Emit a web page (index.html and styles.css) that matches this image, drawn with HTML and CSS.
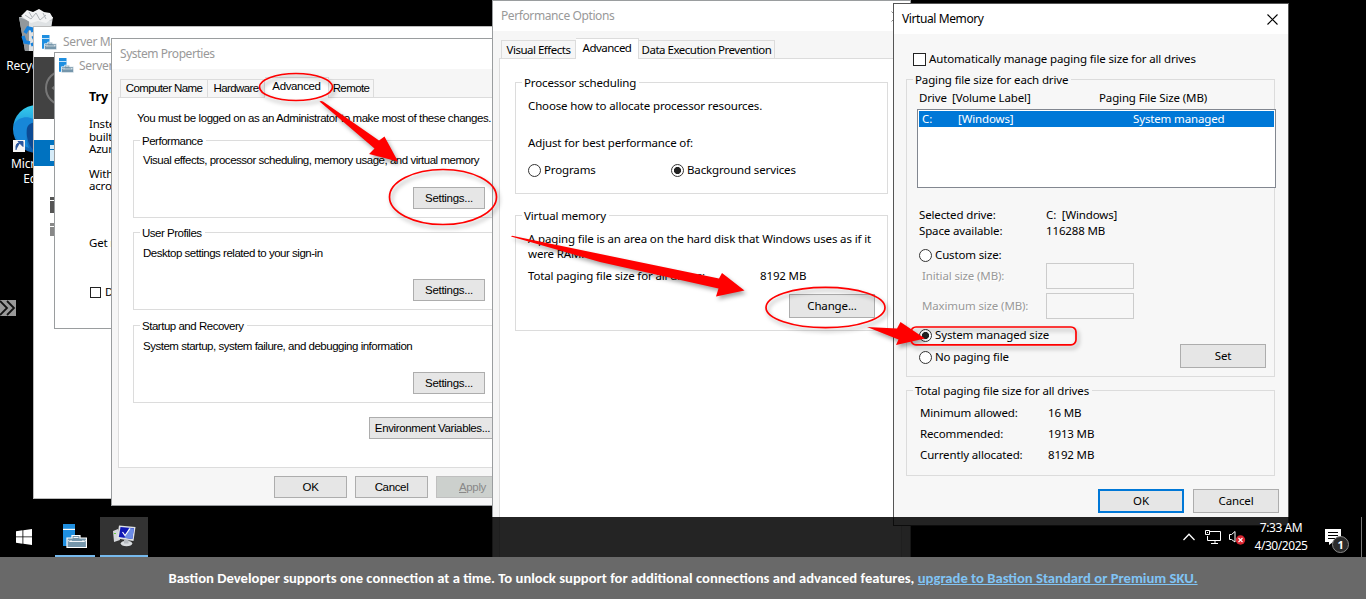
FILE: index.html
```html
<!DOCTYPE html>
<html lang="en">
<head>
<meta charset="utf-8">
<title>Virtual Memory</title>
<link rel="stylesheet" href="styles.css">
</head>
<body>
<svg class="defs" width="0" height="0">
  <symbol id="server" viewBox="0 0 24 24">
    <path d="M0 0H12V22H0Z" fill="#1f8fe0"/><path d="M0 4.800H12V6H0Z" fill="#fff"/>
    <path d="M4 14H9V11.500H17V14H23.500V23.500H4Z" fill="#7596ab" stroke="#fff" stroke-width="1.200"/>
    <path d="M10.500 13.500h5M5 16.500l2 1h14l2-1M8 16v2M20 16v2" fill="none" stroke="#fff" stroke-width=".9"/>
  </symbol>
</svg>
<main class="desktop">
  <div class="shortcut bin">
    <svg width="42" height="44" viewBox="0 0 42 44">
      <path d="M3 8 37 8 31 42 9 42Z" fill="#c9cccf"/><path d="M3 8 13 12 13 42 9 42Z" fill="#92989c"/><path d="M13 12H36L31 42H13Z" fill="#dfe2e4"/>
      <path d="M5 7 11 1 17 3 23 0 28 3 34 4 37 9 30 14 22 12 15 14Z" fill="#f2f3f4"/><path d="M9 6l6 4 5-6 4 7 6-5M13 3l3 5M27 4l3 6" stroke="#aeb3b7" fill="none"/>
      <path d="M9 24l3-5 4 1 1 3M7 27l2 6 5 1M15 36l5-2M17 27l2 4" stroke="#1681dc" stroke-width="3.500" fill="none"/>
    </svg>
    <span>Recycle Bin</span>
  </div>
  <div class="shortcut edge">
    <svg width="48" height="50" viewBox="0 0 48 50">
      <defs><linearGradient id="eg" x1="0" y1="0" x2="0" y2="1"><stop offset="0" stop-color="#35cdec"/><stop offset=".5" stop-color="#1c93dd"/><stop offset="1" stop-color="#0a58a8"/></linearGradient></defs>
      <circle cx="24" cy="25" r="24" fill="url(#eg)"/><path d="M1 20C8 10 20 12 26 20 14 18 10 28 16 44 4 40 0 30 1 20Z" fill="#1787d8"/><path d="M14 24C16 18 22 18 26 20V50C18 48 12 34 14 24Z" fill="#0c4a94"/>
      <path d="M0 36H12V48H0Z" fill="#f5f5f5"/><path d="M3 46V42Q3 39 7 39M5 37.500H10V42.500Z" fill="#29569e" stroke="#29569e"/>
    </svg>
    <span>Microsoft<br>Edge</span>
  </div>
  <div class="handle"><svg width="16" height="16" viewBox="0 0 16 16"><path d="M0 1l7 7-7 7M7 1l7 7-7 7" fill="none" stroke="#111" stroke-width="1.800"/></svg></div>

  <section class="win manager">
    <header class="caption"><svg width="15" height="15"><use href="#server"/></svg>Server Ma</header>
    <div class="band"><svg width="36" height="36" viewBox="0 0 36 36"><circle cx="18" cy="18" r="17" fill="none" stroke="#777" stroke-width="2"/><path d="M14 13l-6 5 6 5" fill="none" stroke="#777" stroke-width="2"/></svg></div>
    <nav class="side"><i class="sel"><b></b></i><i class="m1"></i><i class="m2"></i></nav>
  </section>

  <section class="win promo">
    <header class="caption"><svg width="15" height="15"><use href="#server"/></svg>Server</header>
    <h2>Try W</h2>
    <p>Inste<br>built<br>Azur</p>
    <p class="p2">With<br>acro</p>
    <p class="p3">Get m</p>
    <label class="dont"><i class="check small"></i>D</label>
  </section>

  <section class="win system">
    <header class="caption">System Properties</header>
    <div class="tabs"><span class="t1">Computer Name</span><span class="t2">Hardware</span><span class="t3 on">Advanced</span><span class="t4">Remote</span></div>
    <div class="page">
      <p class="note">You must be logged on as an Administrator to make most of these changes.</p>
      <div class="group"><span class="legend">Performance</span><p>Visual effects, processor scheduling, memory usage, and virtual memory</p><span class="btn">Settings...</span></div>
      <div class="group"><span class="legend">User Profiles</span><p>Desktop settings related to your sign-in</p><span class="btn">Settings...</span></div>
      <div class="group last"><span class="legend">Startup and Recovery</span><p>System startup, system failure, and debugging information</p><span class="btn">Settings...</span></div>
      <span class="btn env">Environment Variables...</span>
    </div>
    <footer><span class="btn">OK</span><span class="btn">Cancel</span><span class="btn off"><u>A</u>pply</span></footer>
  </section>

  <section class="win perf">
    <header class="caption">Performance Options<svg width="11" height="11" viewBox="0 0 11 11"><path d="M.5.5l10 10M10.500.5l-10 10" stroke="#888"/></svg></header>
    <div class="tabs"><span class="t1">Visual Effects</span><span class="t2 on">Advanced</span><span class="t3">Data Execution Prevention</span></div>
    <div class="page">
      <div class="group sched">
        <span class="legend">Processor scheduling</span>
        <p>Choose how to allocate processor resources.</p>
        <p class="adjust">Adjust for best performance of:</p>
        <div class="radios"><label><i class="radio"></i>Programs</label><label><i class="radio on"></i>Background services</label></div>
      </div>
      <div class="group vmem">
        <span class="legend">Virtual memory</span>
        <p>A paging file is an area on the hard disk that Windows uses as if it<br>were RAM.</p>
        <div class="total"><span>Total paging file size for all drives:</span><span>8192 MB</span></div>
        <span class="btn">Change...</span>
      </div>
    </div>
  </section>

  <section class="win vm">
    <header class="caption">Virtual Memory<svg width="11" height="11" viewBox="0 0 11 11"><path d="M.5.5l10 10M10.500.5l-10 10" stroke="#000" stroke-width="1.100"/></svg></header>
    <label class="auto"><i class="check"></i>Automatically manage paging file size for all drives</label>
    <div class="group drives">
      <span class="legend">Paging file size for each drive</span>
      <div class="cols"><span>Drive</span><span>[Volume Label]</span><span>Paging File Size (MB)</span></div>
      <div class="list"><div class="item"><span>C:</span><span>[Windows]</span><span>System managed</span></div></div>
      <div class="facts"><span>Selected drive:</span><span>C:&nbsp; [Windows]</span><span>Space available:</span><span>116288 MB</span></div>
      <label class="opt custom"><i class="radio"></i>Custom size:</label>
      <div class="field"><span>Initial size (MB):</span><i></i></div>
      <div class="field second"><span>Maximum size (MB):</span><i></i></div>
      <div class="choose">
        <div><label class="opt"><i class="radio on"></i>System managed size</label><label class="opt nofile"><i class="radio"></i>No paging file</label></div>
        <span class="btn">Set</span>
      </div>
    </div>
    <div class="group totals">
      <span class="legend">Total paging file size for all drives</span>
      <div class="sums"><span>Minimum allowed:</span><span>16 MB</span><span>Recommended:</span><span>1913 MB</span><span>Currently allocated:</span><span>8192 MB</span></div>
    </div>
    <footer><span class="btn default">OK</span><span class="btn">Cancel</span></footer>
  </section>

  <div class="taskbar">
    <svg class="start" width="16" height="16" viewBox="0 0 16 16"><path d="M0 2.200 6.500 1.300V7.500H0ZM7.300 1.200 16 0V7.500H7.300ZM0 8.300H6.500V14.700L0 13.800ZM7.300 8.300H16V16L7.300 14.800Z" fill="#fff"/></svg>
    <span class="app"><svg width="24" height="24"><use href="#server"/></svg></span>
    <span class="app active"><svg width="23" height="22" viewBox="0 0 23 22"><path d="M0 6l5-2 2 11-6 2Z" fill="#d5d8dc"/><path d="M1 8h2v1H1Z" fill="#6c4"/><path d="M6 .5 22.500 2 20.500 16 4 13.500Z" fill="#dfe2e6"/><path d="M7.500 2 21 3.300 19.300 14 5.800 12Z" fill="#1018b4"/><path d="M16 3l5 .4-1.700 10.500-8-1.200Z" fill="#6c8ce6"/><path d="M9.500 7l2.500 3.500 5-7" fill="none" stroke="#fff" stroke-width="1.200"/><ellipse cx="13.500" cy="18.500" rx="5.800" ry="2.800" fill="#d9dcdf"/><path d="M11 14.500h4.500v4H11Z" fill="#b6babf"/></svg></span>
    <div class="tray">
      <svg class="up" width="12" height="8" viewBox="0 0 12 8"><path d="M.5 7 6 1.300 11.500 7" fill="none" stroke="#fff" stroke-width="1.300"/></svg>
      <svg class="net" width="17" height="15" viewBox="0 0 17 15"><path d="M4.500 1.500H15.500V10.500H2.500V6M10 11V14M6 13.500H13M.5.5H4.500V4.500H.5ZM2 2.500H3" fill="none" stroke="#fff"/></svg>
      <svg class="vol" width="17" height="15" viewBox="0 0 17 15"><path d="M.5 4.500H2.500L6 1.500V12L2.500 9.500H.5Z" fill="none" stroke="#fff"/><circle cx="11.500" cy="10" r="4.700" fill="#da2530"/><path d="M9.500 8l4 4M13.500 8l-4 4" stroke="#fff" stroke-width="1.100"/></svg>
      <div class="clock"><span>7:33 AM</span><span>4/30/2025</span></div>
      <div class="notice"><svg width="17" height="17" viewBox="0 0 17 17"><path d="M0 0H16V13H8L4 16V13H0Z" fill="#fff"/><path d="M3 3.500H13M3 6.500H13M3 9.500H10" stroke="#000"/></svg><b>1</b></div>
      <i class="peek"></i>
    </div>
  </div>

  <div class="banner">Bastion Developer supports one connection at a time. To unlock support for additional connections and advanced features,&nbsp;<a>upgrade to Bastion Standard or Premium SKU.</a></div>

  <svg class="marks" width="1366" height="599" viewBox="0 0 1366 599">
    <g fill="none" stroke="#f00" stroke-width="1.700">
      <ellipse cx="296" cy="87" rx="36.500" ry="13.500"/>
      <ellipse cx="443" cy="197" rx="53.500" ry="27.500"/>
      <ellipse cx="825.500" cy="307.500" rx="59.500" ry="20.200"/>
      <rect x="911" y="327" width="165" height="17.800" rx="5"/>
    </g>
    <g fill="#f00">
      <path d="M319.500 101.500Q321 100.500 323 101.500L379 140.500 384.500 136.500 398 161.500 369 154 374.500 148.500Z"/>
      <path d="M511 236.500 512 235.800 719 278.500 722 273 744.500 290.500 716 296.500 718.500 288.500 600 262Z"/>
      <path d="M867 327 897 328.500 900.500 322 925 338.500 896 345 898.500 339.500Z"/>
    </g>
  </svg>
</main>
</body>
</html>
```
FILE: styles.css
```css
* { box-sizing: border-box; }
body { margin: 0; background: #000; }
p, h2 { margin: 0; font-weight: normal; }
i, b { font-style: normal; }
.defs { position: absolute; }
.desktop { position: relative; width: 1366px; height: 599px; overflow: hidden; background: #000; white-space: nowrap; font: 11.5px/16px "Noto Sans", sans-serif; letter-spacing: -0.14px; color: #000; }

.shortcut { position: absolute; display: flex; flex-direction: column; align-items: center; width: 80px; text-align: center; color: #fff; font-size: 12px; line-height: 15px; }
.bin { left: -3px; top: 9px; gap: 5px; }
.edge { left: -3px; top: 104px; gap: 2px; }
.handle { position: absolute; left: 0; top: 300px; width: 16px; height: 16px; background: #999; }
.handle svg { display: block; }

.win { position: absolute; border: 1px solid #9a9d9f; background: #f6f6f6; }
.caption { display: flex; align-items: center; height: 30px; padding: 0 8px; background: #fff; color: #999; font-size: 12px; letter-spacing: -0.4px; }
.btn { display: flex; align-items: center; justify-content: center; border: 1px solid #adadad; background: #e6e6e6; }
.group { border: 1px solid #dcdcdc; }
.legend { display: block; width: fit-content; margin: -8px 0 0 6px; padding: 0 3px 0 2px; background: #fff; }
.tabs { display: flex; align-items: flex-end; height: 21px; }
.tabs span { height: 18px; line-height: 17px; text-align: center; border: 1px solid #dcdcdc; border-bottom: 0; border-left: 0; }
.tabs span:first-child { border-left: 1px solid #dcdcdc; }
.tabs .on { height: 21px; margin-bottom: -1px; background: #fff; position: relative; }
.page { border: 1px solid #dcdcdc; border-right: 0; background: #fff; }
.radio { flex: none; width: 13px; height: 13px; border: 1px solid #333; border-radius: 50%; background: #fff; }
.radio.on { background: radial-gradient(circle, #222 3.2px, #fff 3.9px); }
.check { flex: none; width: 13px; height: 13px; border: 1px solid #222; background: #fff; }
label { display: flex; align-items: center; gap: 3px; }

.manager { left: 33px; top: 26px; width: 500px; height: 473px; background: #fff; border-color: #bbb; }
.manager .caption { gap: 6px; letter-spacing: -0.35px; }
.band { height: 62px; padding: 13px 11px; background: #424242; }
.side { padding-top: 21px; }
.side i { display: block; margin-left: 16px; width: 5px; }
.side .sel { width: 100%; height: 26px; margin: 0 0 31px; padding: 5px 16px; background: #0072c0; }
.side .sel b { display: block; width: 5px; height: 16px; background: linear-gradient(#d5ebf8 4px, #0072c0 4px 5px, #d5ebf8 5px); }
.side .m1 { height: 16px; background: linear-gradient(#555 3px, #fff 3px 4px, #555 4px); }
.side .m2 { height: 13px; margin-top: 10px; background: linear-gradient(#888 3px, #fff 3px 4px, #888 4px); }

.promo { left: 54px; top: 52px; width: 460px; height: 277px; padding-left: 34px; background: #fff; }
.promo .caption { margin-left: -34px; height: 25px; padding-left: 4px; gap: 5px; letter-spacing: -0.35px; }
.promo h2 { margin: 11px 0 13px; font-size: 12.5px; font-weight: bold; line-height: 16px; }
.promo p { line-height: 12.500px; letter-spacing: -0.2px; }
.promo .p2 { margin-top: 12px; }
.promo .p3 { margin-top: 44px; }
.promo .dont { margin-top: 35px; margin-left: 1px; gap: 4px; }
.small { width: 11px; height: 11px; }

.system { left: 111px; top: 38px; width: 410px; height: 468px; font: 11.5px/16px "Liberation Sans", Arial, sans-serif; letter-spacing: -0.48px; }
.system .caption { font-family: "Noto Sans", sans-serif; letter-spacing: -0.45px; }
.system .tabs { margin: 7px 0 0 8px; letter-spacing: -0.6px; }
.system .tabs .on { letter-spacing: -0.35px; }
.system .t1 { width: 88px; }
.system .t2 { width: 57px; }
.system .t3 { width: 64px; }
.system .t4 { width: 45px; }
.system .page { height: 371px; margin-left: 6px; padding: 12px 0 0 14px; }
.system .note { padding-left: 4px; letter-spacing: -0.43px; }
.system .group { height: 78px; margin: 14px 0; padding-left: 1px; }
.system .last { margin-top: 15px; }
.system .group p { margin: 4px 0 0 8px; }
.system .note + .group p { margin-top: 3px; }
.system .legend { margin-left: 5px; }
.system .group .btn { width: 72px; height: 22px; margin: 18px 0 0 278px; letter-spacing: -0.3px; }
.system .note + .group .btn { margin-top: 19px; }
.system .env { width: 127px; height: 22px; margin-left: 236px; letter-spacing: -0.38px; }
.system footer { display: flex; gap: 8px; padding: 8px 0 0 162px; letter-spacing: -0.35px; }
.system footer .btn { width: 73px; height: 22px; }
.system footer .off { color: #888; background: #ccd0cd; border-color: #bfbfbf; }

.perf { left: 492px; top: 0; width: 419px; height: 600px; }
.perf .caption svg { margin-left: auto; margin-right: 0; }
.perf .tabs { margin: 7px 0 0 8px; height: 20px; letter-spacing: -0.5px; }
.perf .t1 { width: 75px; }
.perf .t2 { width: 63px; }
.perf .t3 { width: 136px; }
.perf .page { height: 545px; margin: 0 8px 0 6px; padding: 23px 0 0 15px; border-right: 1px solid #dcdcdc; }
.perf .group { width: 373px; padding-left: 12px; }
.perf .legend { margin-left: -6px; }
.sched { height: 112px; }
.sched p { margin-top: 7px; }
.sched .adjust { margin-top: 21px; }
.radios { display: grid; grid-template-columns: 143px 1fr; margin-top: 11px; }
.vmem { height: 116px; margin-top: 21px; }
.vmem p { margin-top: 7px; line-height: 15px; }
.total { display: grid; grid-template-columns: 232px 1fr; margin-top: 7px; }
.vmem .btn { width: 86px; height: 24px; margin: 10px 0 0 261px; }

.vm { left: 893px; top: 3px; width: 396px; height: 523px; border-color: #555; background: #f7f7f7; }
.vm .caption { color: #000; }
.vm .caption svg { margin-left: auto; margin-right: 2px; }
.vm .auto { margin: 17px 0 0 19px; }
.vm .group { width: 369px; margin-left: 12px; padding-left: 12px; }
.vm .legend { background: #f7f7f7; margin-left: -6px; }
.drives { height: 298px; margin-top: 12px; }
.cols { display: grid; grid-template-columns: 33px 147px 1fr; margin: 2px 0 3px; }
.list { width: 359px; height: 79px; margin-left: -2px; padding: 1px; border: 1px solid #828790; background: #fff; }
.item { display: grid; grid-template-columns: 36px 175px 1fr; height: 16px; padding-left: 3px; background: #0078d7; color: #fff; }
.facts { display: grid; grid-template-columns: 127px 1fr; margin-top: 19px; }
.custom { margin-top: 8px; }
.field { display: flex; align-items: center; height: 26px; color: #999; text-shadow: 1px 1px #fff; }
.field span { width: 124px; margin-left: 3px; }
.field i { width: 88px; height: 26px; border: 1px solid #ccc; }
.second { margin-top: 4px; }
.choose { display: flex; margin-top: 8px; }
.choose > div { width: 261px; }
.nofile { margin-top: 6px; }
.choose .btn { width: 86px; height: 24px; margin-top: 17px; }
.totals { height: 86px; margin-top: 13px; }
.sums { display: grid; grid-template-columns: 128px 1fr; row-gap: 5px; margin: 6px 0 0 1px; }
.vm footer { display: flex; gap: 9px; margin: 13px 0 0 204px; }
.vm footer .btn { width: 86px; height: 24px; }
.vm footer .default { border: 2px solid #0078d7; }

.taskbar { position: absolute; left: 0; top: 517px; width: 1366px; height: 40px; display: flex; align-items: center; padding-left: 16px; background: rgba(0, 0, 0, 0.86); }
.start { margin-right: 23px; }
.app { display: flex; align-items: center; justify-content: center; width: 40px; height: 40px; margin-right: 5px; border-bottom: 2px solid #76b9ed; }
.app.active { width: 48px; background: #333; }
.tray { display: flex; align-items: center; margin-left: auto; height: 40px; }
.up { margin-right: 10px; }
.net { margin-right: 7px; }
.vol { margin-right: 9px; }
.clock { width: 52px; margin-right: 18px; display: flex; flex-direction: column; align-items: center; color: #fff; font-size: 12px; line-height: 18px; letter-spacing: -0.45px; }
.notice { position: relative; width: 36px; height: 17px; }
.notice b { position: absolute; left: 7px; top: 7px; width: 17px; height: 17px; border: 1px solid #888; border-radius: 50%; background: #2b2b2b; color: #fff; font-size: 11px; line-height: 15px; text-align: center; }
.peek { width: 1px; height: 40px; background: #777; margin-right: 4px; }

.banner { position: absolute; left: 0; top: 557px; width: 1366px; height: 42px; display: flex; align-items: center; justify-content: center; background: #696969; color: #fff; font: bold 14.667px/20px Carlito, Lato, sans-serif; letter-spacing: 0; }
.banner a { color: #80c4f5; text-decoration: underline; }
.marks { position: absolute; left: 0; top: 0; filter: drop-shadow(2px 3px 2px rgba(0, 0, 0, 0.35)); }
```
